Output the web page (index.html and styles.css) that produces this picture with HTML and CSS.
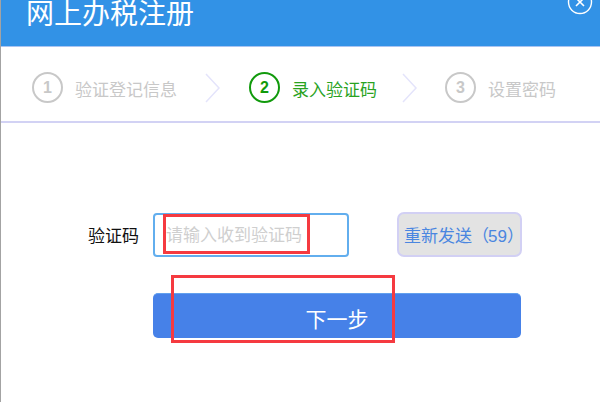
FILE: index.html
```html
<!DOCTYPE html>
<html lang="zh">
<head>
<meta charset="utf-8">
<title>网上办税注册</title>
<link rel="stylesheet" href="styles.css">
</head>
<body>
<div class="window">
  <header class="header">
    <h1 class="title">网上办税注册</h1>
    <svg class="close" viewBox="0 0 26 26" width="26" height="26" aria-hidden="true">
      <circle cx="13" cy="13" r="11.5" fill="none" stroke="#fff" stroke-width="1.4"/>
      <path d="M9 9 L17 17 M17 9 L9 17" fill="none" stroke="#fff" stroke-width="1.6"/>
    </svg>
  </header>
  <nav class="steps">
    <div class="step"><span class="num">1</span><span class="label">验证登记信息</span></div>
    <svg class="chev chev-one" viewBox="0 0 16 30" width="16" height="30" aria-hidden="true"><path d="M1 1 L14 15 L1 29" fill="none" stroke="#e4e4fb" stroke-width="1.5"/></svg>
    <div class="step step-two active"><span class="num">2</span><span class="label">录入验证码</span></div>
    <svg class="chev chev-two" viewBox="0 0 16 30" width="16" height="30" aria-hidden="true"><path d="M1 1 L14 15 L1 29" fill="none" stroke="#e4e4fb" stroke-width="1.5"/></svg>
    <div class="step step-three"><span class="num">3</span><span class="label">设置密码</span></div>
  </nav>
  <main class="form">
    <div class="row">
      <label class="field-label" for="code">验证码</label>
      <input class="input" id="code" type="text" placeholder="请输入收到验证码">
      <button class="resend" type="button">重新发送<span class="paren">（</span><span class="count">59</span>）</button>
    </div>
    <button class="next" type="button">下一步</button>
  </main>
</div>
<div class="mark mark-input"></div>
<div class="mark mark-button"></div>
</body>
</html>
```

FILE: styles.css
```css
* { box-sizing: border-box; }
html, body { margin: 0; padding: 0; }
body {
  width: 600px;
  height: 402px;
  overflow: hidden;
  position: relative;
  background: #fff;
  font-family: "Liberation Sans", "Noto Sans CJK SC", sans-serif;
}
.window {
  width: 600px;
  height: 402px;
  border-left: 1px solid #a3a3a3;
  display: flex;
  flex-direction: column;
}
.header {
  height: 47px;
  flex: none;
  background: #3292e6;
  border-bottom: 1px solid #a9c4f2;
  display: flex;
  justify-content: space-between;
  align-items: flex-start;
  padding: 0 7px 0 25px;
  overflow: hidden;
}
.title {
  margin: -5px 0 0;
  font-size: 28px;
  line-height: 40px;
  font-weight: 400;
  color: #fff;
}
.close { margin-top: -11px; }
.steps {
  height: 76px;
  flex: none;
  border-bottom: 2px solid #d2d2f4;
  display: flex;
  align-items: center;
  padding: 7px 0 0 31px;
}
.step {
  display: flex;
  align-items: center;
  gap: 12px;
  color: #c8c8c8;
  font-size: 17px;
}
.label { margin-top: 1px; }
.num {
  width: 31px;
  height: 31px;
  border: 2px solid #c8c8c8;
  border-radius: 50%;
  display: flex;
  align-items: center;
  justify-content: center;
  font-size: 16px;
  font-weight: 700;
  flex: none;
}
.active { color: #2aa31f; }
.active .num { border-color: #119a0c; color: #119a0c; }
.chev { flex: none; }
.chev-one { margin-left: 28px; }
.chev-two { margin-left: 25px; }
.step-two { margin-left: 28px; }
.step-three { margin-left: 27px; }
.form {
  padding: 89px 0 0 152px;
  display: flex;
  flex-direction: column;
  gap: 36px;
  flex: 1;
}
.row {
  display: flex;
  align-items: center;
  position: relative;
}
.field-label {
  position: absolute;
  left: -65px;
  font-size: 17px;
  color: #111;
}
.input {
  width: 196px;
  height: 44px;
  border: 2px solid #62aeee;
  border-radius: 4px;
  padding: 3px 11px 0;
  font: 17px "Liberation Sans", "Noto Sans CJK SC", sans-serif;
  outline: none;
}
.input::placeholder { color: #cfcfcf; opacity: 1; }
.resend {
  margin-left: 48px;
  width: 125px;
  height: 45px;
  border: 2px solid #d2d0f4;
  border-radius: 7px;
  background: #e3e3e3;
  color: #4a86e0;
  font: 17px "Liberation Sans", "Noto Sans CJK SC", sans-serif;
  padding: 0 0 1px 5px;
  text-align: left;
  white-space: nowrap;
  overflow: visible;
}
.paren { letter-spacing: -1px; }
.count { letter-spacing: 0; }
.next {
  width: 368px;
  height: 45px;
  border: 0;
  border-top: 1px solid #62a0ee;
  border-radius: 5px;
  background: #4681e8;
  color: #fff;
  font: 21px "Liberation Sans", "Noto Sans CJK SC", sans-serif;
  padding: 3px 0 0;
}
.mark {
  position: absolute;
  border: 3px solid #f53a40;
  pointer-events: none;
}
.mark-input { left: 163px; top: 214px; width: 147px; height: 40px; }
.mark-button { left: 171px; top: 275px; width: 224px; height: 68px; }
```
